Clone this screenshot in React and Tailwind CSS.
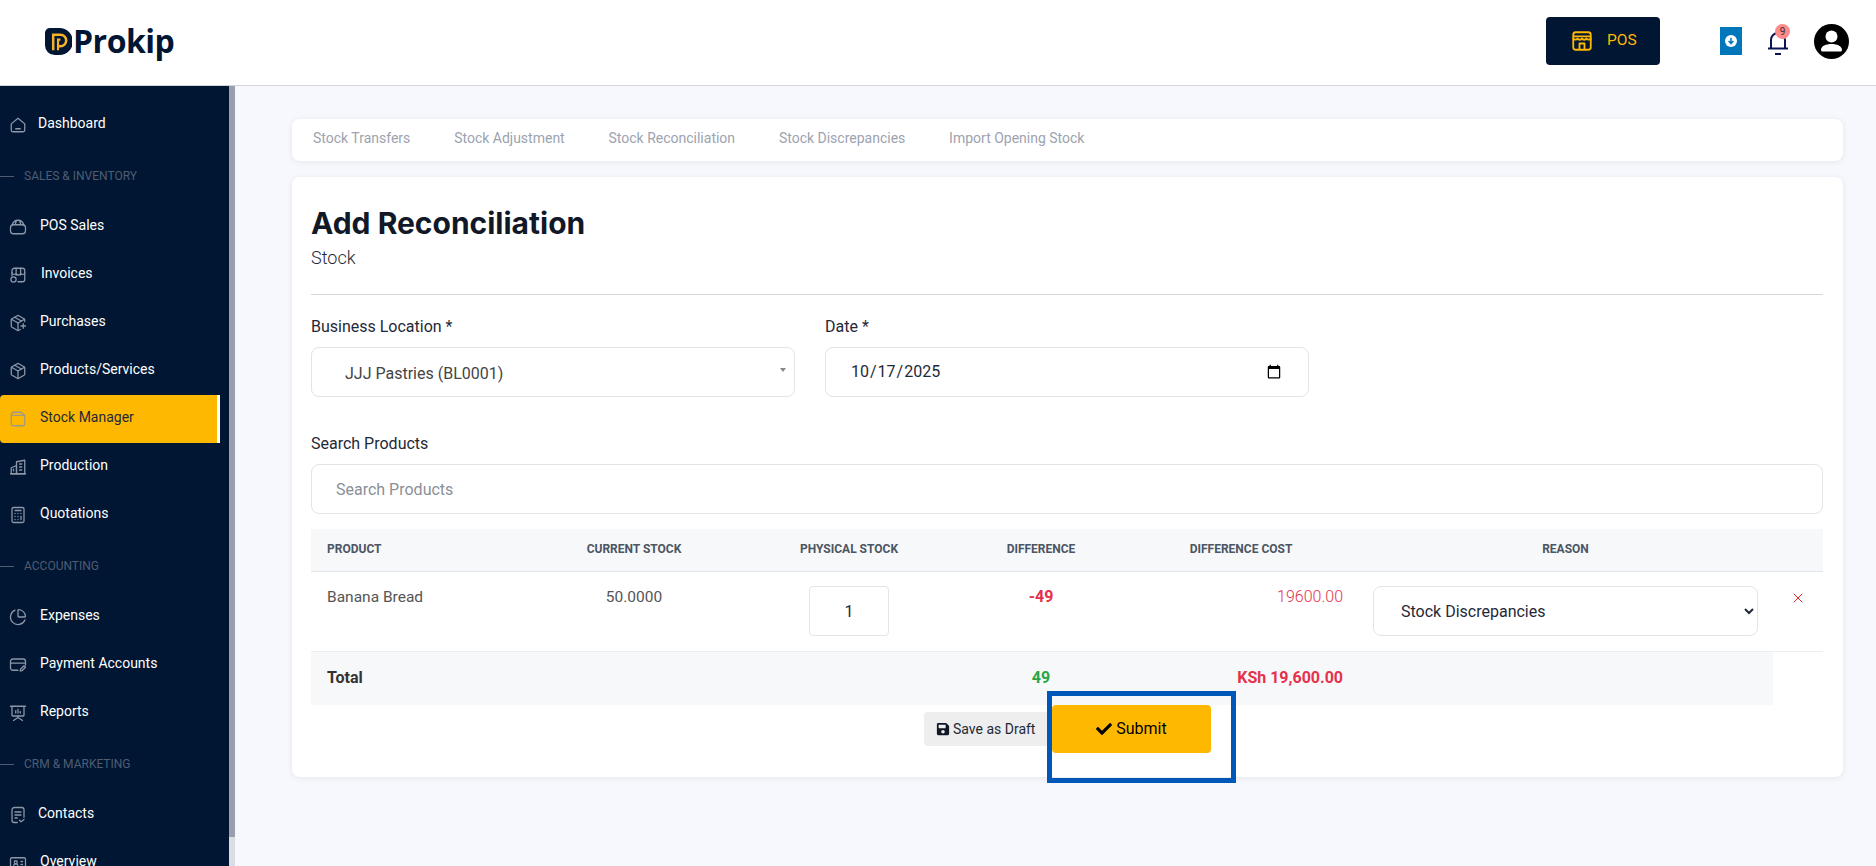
import React from 'react';
import { Package, PackagePlus, Calculator, ChartPie, IdCard, X } from 'lucide-react';
import { FaCheck, FaSave } from 'react-icons/fa';

const HomeIcon = (props) => (
  <svg viewBox="0 0 24 24" fill="none" stroke="currentColor" strokeWidth="1.7" strokeLinejoin="round" strokeLinecap="round" {...props}>
    <path d="M3 10.5 12 3l9 7.5V19a2 2 0 0 1-2 2H5a2 2 0 0 1-2-2z" />
    <path d="M9 17h6" />
  </svg>
);

const BagIcon = (props) => (
  <svg viewBox="0 0 24 24" fill="none" stroke="currentColor" strokeWidth="1.7" strokeLinejoin="round" strokeLinecap="round" {...props}>
    <path d="M2 13a4 4 0 0 1 4-4h12a4 4 0 0 1 4 4v4a4 4 0 0 1-4 4H6a4 4 0 0 1-4-4z" />
    <path d="M4 10c1-4 4-7 8-7s7 3 8 7M10 3l-1.5 5M14 3l1.5 5" />
  </svg>
);

const StoreGearIcon = (props) => (
  <svg viewBox="0 0 24 24" fill="none" stroke="currentColor" strokeWidth="1.7" strokeLinejoin="round" strokeLinecap="round" {...props}>
    <path d="M4 13V6a3 3 0 0 1 3-3h11a3 3 0 0 1 3 3v12a3 3 0 0 1-3 3h-6" />
    <path d="M9.5 3v9M15.5 3v9M4 9a2.8 2.8 0 0 0 5.5 0 3 3 0 0 0 6 0 2.8 2.8 0 0 0 5.5 0" />
    <circle cx="6" cy="18" r="3.5" />
  </svg>
);

const NoteIcon = (props) => (
  <svg viewBox="0 0 24 24" fill="none" stroke="currentColor" strokeWidth="1.7" strokeLinejoin="round" {...props}>
    <path d="M3 6a3 3 0 0 1 3-3h10l5 4v11a3 3 0 0 1-3 3H6a3 3 0 0 1-3-3z" />
    <path d="M3 7h18" />
  </svg>
);

const BuildingsIcon = (props) => (
  <svg viewBox="0 0 24 24" fill="none" stroke="currentColor" strokeWidth="1.7" strokeLinejoin="round" strokeLinecap="round" {...props}>
    <path d="M3 21V13l7-3v11z" />
    <path d="M10 21V5l11-2v18z" />
    <path d="M2 21h20M14 8h3M14 12h3M14 16h3M6 15v2" />
  </svg>
);

const CardPenIcon = (props) => (
  <svg viewBox="0 0 24 24" fill="none" stroke="currentColor" strokeWidth="1.7" strokeLinejoin="round" strokeLinecap="round" {...props}>
    <path d="M12 19H5a3 3 0 0 1-3-3V7a3 3 0 0 1 3-3h14a3 3 0 0 1 3 3v5" />
    <path d="M2 9.5h20" />
    <path d="m15 20 .6-2.6L20 13l2 2-4.4 4.4z" />
  </svg>
);

const BoardIcon = (props) => (
  <svg viewBox="0 0 24 24" fill="none" stroke="currentColor" strokeWidth="1.7" strokeLinejoin="round" strokeLinecap="round" {...props}>
    <path d="M2 3h20M4 3v12a1 1 0 0 0 1 1h14a1 1 0 0 0 1-1V3" />
    <path d="M9 12V9M12 12V7M15 12v-2M12 16v2M6 22l6-4 6 4" />
  </svg>
);

const ChecklistIcon = (props) => (
  <svg viewBox="0 0 24 24" fill="none" stroke="currentColor" strokeWidth="1.7" strokeLinejoin="round" strokeLinecap="round" {...props}>
    <path d="M11 22H7a3 3 0 0 1-3-3V5a3 3 0 0 1 3-3h10a3 3 0 0 1 3 3v10" />
    <path d="M8 8h8M8 12h8M8 16h3M14 19l2 2 4-3" />
  </svg>
);

const menu = [
  { type: 'item', label: 'Dashboard', icon: HomeIcon, textClass: 'mb-[3px] ml-[11px]' },
  { type: 'title', label: 'SALES & INVENTORY' },
  { type: 'item', label: 'POS Sales', icon: BagIcon, textClass: 'mb-[3px] ml-[13px]' },
  { type: 'item', label: 'Invoices', icon: StoreGearIcon, textClass: 'mb-[3px] ml-[14px]' },
  { type: 'item', label: 'Purchases', icon: PackagePlus, textClass: 'mb-[4px] ml-[13px]' },
  { type: 'item', label: 'Products/Services', icon: Package, textClass: 'mb-[4px] ml-[13px]' },
  { type: 'item', label: 'Stock Manager', icon: NoteIcon, textClass: 'mb-[4px] ml-[13px]', active: true },
  { type: 'item', label: 'Production', icon: BuildingsIcon, textClass: 'mb-[4px] ml-[13px]' },
  { type: 'item', label: 'Quotations', icon: Calculator, textClass: 'mb-[4px] ml-[13px]' },
  { type: 'title', label: 'ACCOUNTING' },
  { type: 'item', label: 'Expenses', icon: ChartPie, textClass: 'mb-[4px] ml-[13px]' },
  { type: 'item', label: 'Payment Accounts', icon: CardPenIcon, textClass: 'mb-[4px] ml-[13px]' },
  { type: 'item', label: 'Reports', icon: BoardIcon, textClass: 'mb-[4px] ml-[13px]' },
  { type: 'title', label: 'CRM & MARKETING' },
  { type: 'item', label: 'Contacts', icon: ChecklistIcon, textClass: 'mb-[4px] ml-[11px]' },
  { type: 'item', label: 'Overview', icon: IdCard, textClass: 'mb-[4px] ml-[13px]' },
];

const tabs = [
  'Stock Transfers',
  'Stock Adjustment',
  'Stock Reconciliation',
  'Stock Discrepancies',
  'Import Opening Stock',
];

const Header = () => (
  <header className="flex h-[86px] shrink-0 items-center border-b border-[#d5d6dd] bg-white pb-[3px]">
    <div className="ml-[45px] flex items-center">
      <svg viewBox="0 0 28 28" className="h-[27px] w-[27px]">
        <path d="M0 5a5 5 0 0 1 5-5h10a13.5 13.5 0 0 1 0 28h-5A10 10 0 0 1 0 18z" fill="#001633" />
        <path d="M8.5 23V7h7.5a6 6 0 0 1 0 12h-2" fill="none" stroke="#f5b32a" strokeWidth="2.6" />
        <path d="M13.5 23v-11h2.5" fill="none" stroke="#f5b32a" strokeWidth="2.2" />
      </svg>
      <span className="ml-[1px] font-['Open_Sans',sans-serif] text-[32px] leading-none font-bold tracking-[-0.5px] text-[#001633]">
        Prokip
      </span>
    </div>
    <button className="ml-auto flex h-[48px] w-[114px] items-center rounded-[4px] bg-[#001633] pl-[26px] text-[15.5px] text-[#ffb800]">
      <svg viewBox="0 0 24 24" className="h-[20px] w-[20px]" fill="none" stroke="currentColor" strokeWidth="2.2" strokeLinejoin="round">
        <rect x="1.5" y="1.5" width="21" height="21" rx="3" />
        <path d="M1.5 6.5h21M1.5 8c0 3 4 3 5.2 1 1 2 4.300 2 5.300 0 1 2 4.300 2 5.300 0 1.200 2 5.200 2 5.200-1" />
        <path d="M9 22.500V15h6v7.500" />
      </svg>
      <span className="ml-[15px]">POS</span>
    </button>
    <div className="ml-[60px] flex h-[28px] w-[22px] items-center justify-center bg-[#0077bb]">
      <svg viewBox="0 0 16 16" className="h-[12px] w-[12px]">
        <circle cx="8" cy="8" r="8" fill="#fff" />
        <path d="M8 3.500v8M4.800 8 8 11.500 11.200 8" fill="none" stroke="#0077bb" strokeWidth="2" />
      </svg>
    </div>
    <div className="relative ml-[26px] h-[28px] w-[20px]">
      <svg viewBox="0 0 20 28" className="h-[28px] w-[20px]" fill="none" stroke="#0a1550" strokeWidth="2">
        <path d="M3 21V13a7 7 0 0 1 14 0v8" />
        <path d="M0 21.500h20" />
        <path d="M7 27h6" />
      </svg>
      <span className="absolute top-[-3px] left-[7px] flex h-[15px] w-[15px] items-center justify-center rounded-full bg-[#ff8a8a] text-[10px] leading-none text-[#333]">
        9
      </span>
    </div>
    <div className="mr-[27px] ml-[26px] h-[35px] w-[35px]">
      <svg viewBox="0 0 35 35" className="h-[35px] w-[35px]">
        <circle cx="17.500" cy="17.500" r="17.500" fill="#000" />
        <circle cx="17.500" cy="12.500" r="6" fill="#fff" />
        <path d="M7 26c0-4 5-6 10.500-6S28 22 28 26a1.500 1.500 0 0 1-1.500 1.500h-18A1.500 1.500 0 0 1 7 26z" fill="#fff" />
      </svg>
    </div>
  </header>
);

const Sidebar = () => (
  <div className="flex shrink-0">
    <aside className="w-[229px] overflow-hidden bg-[#001633] pt-[15px] pr-[9px]">
      {menu.map((entry) =>
        entry.type === 'title' ? (
          <div key={entry.label} className="flex h-[54px] items-center text-[12px] text-[#4f5d72]">
            <span className="h-px w-[14px] bg-[#4f5d72]" />
            <span className="ml-[10px]">{entry.label}</span>
          </div>
        ) : (
          <div
            key={entry.label}
            className={
              entry.active
                ? 'flex h-[48px] items-center rounded-l-[4px] border-r-[3px] border-white bg-[#ffb800] pl-[9px] text-[14px] text-[#1f2937]'
                : 'flex h-[48px] items-center pl-[9px] text-[14px] text-white'
            }
          >
            <entry.icon
              className={entry.active ? 'h-[18px] w-[18px] text-[#9a9a8a]' : 'h-[18px] w-[18px] text-[#8d97a8]'}
              strokeWidth={1.7}
            />
            <span className={entry.textClass}>{entry.label}</span>
          </div>
        )
      )}
    </aside>
    <div className="flex w-[6px] flex-col bg-[#dcdde3]">
      <div className="h-[751px] bg-[#9a9fae]" />
    </div>
  </div>
);

const StockTable = () => (
  <table className="w-[1512px] table-fixed border-collapse text-[16px]">
    <colgroup>
      <col className="w-[217px]" />
      <col className="w-[212px]" />
      <col className="w-[218px]" />
      <col className="w-[166px]" />
      <col className="w-[234px]" />
      <col className="w-[415px]" />
      <col className="w-[50px]" />
    </colgroup>
    <thead>
      <tr className="h-[42px] border-b border-[#e1e4ea] bg-[#f7f8fa] text-[12px] font-bold text-[#4b5563]">
        <th className="px-[16px] pb-px text-left">PRODUCT</th>
        <th className="pb-px">CURRENT STOCK</th>
        <th className="pb-px">PHYSICAL STOCK</th>
        <th className="pb-px">DIFFERENCE</th>
        <th className="pb-px">DIFFERENCE COST</th>
        <th className="pb-px">REASON</th>
        <th />
      </tr>
    </thead>
    <tbody>
      <tr className="h-[80px] border-b border-[#eceef2] align-top">
        <td className="px-[16px] pt-[14px] text-[15.5px] text-[#555]">Banana Bread</td>
        <td className="pt-[14px] text-center text-[15.5px] text-[#555]">50.0000</td>
        <td className="pt-[14px] text-center">
          <input
            type="text"
            defaultValue="1"
            className="h-[50px] w-[80px] rounded-[4px] border border-[#e3e4e8] pt-[2px] text-center text-[#1f2937]"
          />
        </td>
        <td className="pt-[13px] text-center font-bold text-[#e5324b]">-49</td>
        <td className="px-[15px] pt-[13px] text-right font-light text-[#e5324b]">19600.00</td>
        <td className="px-[15px] pt-[14px]">
          <select className="h-[50px] w-[385px] rounded-[8px] border border-[#e3e4e8] bg-white pt-[2px] pl-[23px] text-[#1f2937]">
            <option>Stock Discrepancies</option>
          </select>
        </td>
        <td className="pt-[18px]">
          <X className="mx-auto h-[16px] w-[16px] text-[#ef2b2b]" strokeWidth={1.5} />
        </td>
      </tr>
      <tr className="h-[54px] font-bold">
        <td colSpan={3} className="bg-[#f7f8fa] px-[16px] text-[#333]">Total</td>
        <td className="bg-[#f7f8fa] text-center text-[#28a745]">49</td>
        <td className="bg-[#f7f8fa] px-[15px] text-right text-[#e5324b]">KSh 19,600.00</td>
        <td className="bg-[#f7f8fa]" />
      </tr>
    </tbody>
  </table>
);

const App = () => (
  <div className="flex h-[866px] flex-col overflow-hidden bg-[#f7f8fd] font-['Roboto',sans-serif]">
    <Header />
    <div className="flex min-h-0 flex-1">
      <Sidebar />
      <main className="flex-1 pt-[33px] pr-[33px] pl-[57px]">
        <nav className="flex h-[42px] items-center gap-[43.8px] rounded-[8px] bg-white pb-[3px] pl-[21px] text-[14px] text-[#9ca3af] shadow-[0_1px_6px_rgba(20,30,60,0.08)]">
          {tabs.map((tab) => (
            <span key={tab}>{tab}</span>
          ))}
        </nav>
        <section className="relative mt-[16px] h-[600px] rounded-[8px] bg-white pt-[28px] pr-[20px] pl-[19px] shadow-[0_1px_6px_rgba(20,30,60,0.08)]">
          <h1 className="font-['Inter',sans-serif] text-[30px] leading-[36px] font-bold text-[#111827]">
            Add Reconciliation
          </h1>
          <p className="mt-[5px] text-[18px] leading-[24px] font-light text-[#1f2937]">Stock</p>
          <hr className="mt-[24px] border-[#d5d7dc]" />

          <div className="mt-[20px] flex gap-[30px] text-[16px]">
            <div className="w-[484px]">
              <label className="block leading-[24px] text-[#1f2937]">Business Location *</label>
              <div className="mt-[8px] flex h-[50px] items-center justify-between rounded-[8px] border border-[#e3e4e8] pr-[8px] pl-[33px] text-[#444]">
                <span className="mt-[4px]">JJJ Pastries (BL0001)</span>
                <span className="mb-[4px] h-0 w-0 border-x-[3px] border-t-[4px] border-x-transparent border-t-[#888]" />
              </div>
            </div>
            <div className="w-[484px]">
              <label className="block leading-[24px] text-[#1f2937]">Date *</label>
              <input
                type="date"
                defaultValue="2025-10-17"
                className="mt-[8px] h-[50px] w-full rounded-[8px] border border-[#e3e4e8] pr-[24px] pl-[24px] text-[#1f2937]"
              />
            </div>
          </div>

          <label className="mt-[35px] block text-[16px] leading-[24px] text-[#1f2937]">Search Products</label>
          <input
            type="text"
            placeholder="Search Products"
            className="mt-[8px] block h-[50px] w-full rounded-[8px] border border-[#e3e4e8] pl-[24px] text-[16px] placeholder:text-[#8a8f98]"
          />

          <div className="mt-[15px]">
            <StockTable />
          </div>

          <div className="ml-[613px] flex items-start">
            <button className="mt-[7px] flex h-[34px] w-[128px] items-center rounded-[4px] bg-[#eeeeee] pl-[12px] text-[14px] text-[#1f2937]">
              <FaSave className="h-[14px] w-[14px] text-[#111827]" />
              <span className="ml-[3px]">Save as Draft</span>
            </button>
            <button className="flex h-[48px] w-[159px] items-center justify-center rounded-[4px] bg-[#ffb800] text-[16px] text-black">
              <FaCheck className="h-[16px] w-[16px]" />
              <span className="ml-[4px]">Submit</span>
            </button>
          </div>

          <div className="absolute top-[514px] left-[755px] h-[92px] w-[189px] border-[5px] border-[#0057b8]" />
        </section>
      </main>
    </div>
  </div>
);

export default App;
